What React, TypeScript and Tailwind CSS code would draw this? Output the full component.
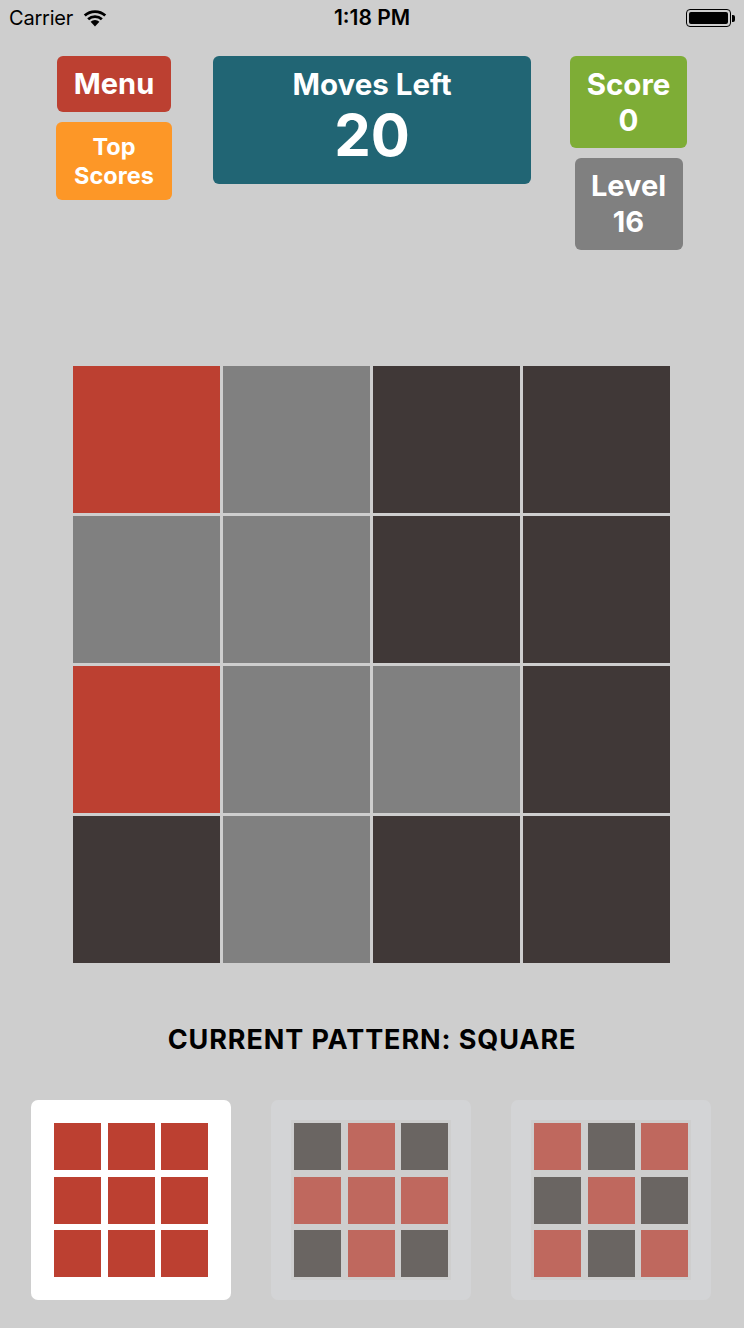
import React from "react";

const R = "bg-[#bc4031]";
const G = "bg-[#808080]";
const D = "bg-[#403837]";

const board = [
  [R, G, D, D],
  [G, G, D, D],
  [R, G, G, D],
  [D, G, D, D],
];

// 1 = red, 0 = dark
const patterns = [
  { active: true, cells: [1, 1, 1, 1, 1, 1, 1, 1, 1] },
  { active: false, cells: [0, 1, 0, 1, 1, 1, 0, 1, 0] },
  { active: false, cells: [1, 0, 1, 0, 1, 0, 1, 0, 1] },
];

function Wifi() {
  return (
    <svg width="24" height="18" viewBox="0 0 24 18">
      <path d="M0.8 5.6 A16.5 16.5 0 0 1 23.2 5.6 L21.3 7.6 A13.7 13.7 0 0 0 2.7 7.6 Z" fill="#000" />
      <path d="M4.2 9.2 A11.5 11.5 0 0 1 19.8 9.2 L17.9 11.2 A8.7 8.7 0 0 0 6.1 11.2 Z" fill="#000" />
      <path d="M7.6 12.8 A6.6 6.6 0 0 1 16.4 12.8 L12 17.4 Z" fill="#000" />
    </svg>
  );
}

function Battery() {
  return (
    <div className="flex items-center">
      <div className="w-[45px] h-[18px] rounded-[4px] border border-black p-[2px]">
        <div className="w-full h-full bg-black rounded-[2px]" />
      </div>
      <div className="w-[3px] h-[7px] bg-black rounded-r-[2px] ml-[1px]" />
    </div>
  );
}

export default function App() {
  return (
    <main
      className="w-[744px] h-[1328px] bg-[#cecece] flex flex-col overflow-hidden"
      style={{ fontFamily: "Inter, 'Liberation Sans', sans-serif" }}
    >
      <div className="h-[36px] relative flex items-center px-[9px] text-black">
        <div className="flex items-center gap-[10px]">
          <span className="text-[20px] tracking-[-0.2px]">Carrier</span>
          <Wifi />
        </div>
        <span className="absolute left-0 right-0 text-center text-[21px] font-semibold pointer-events-none">
          1:18 PM
        </span>
        <div className="ml-auto">
          <Battery />
        </div>
      </div>

      <header className="flex items-start pl-[56px] mt-[20px] text-white font-bold">
        <div className="w-[116px] flex flex-col items-center gap-[10px]">
          <button className="w-[114px] h-[56px] rounded-[6px] bg-[#bc4031] text-[29px]">
            Menu
          </button>
          <button className="w-[116px] h-[78px] rounded-[6px] bg-[#fd9727] text-[23.5px] leading-[29px] flex flex-col items-center justify-center">
            <span>Top</span>
            <span>Scores</span>
          </button>
        </div>
        <div className="ml-[41px] w-[318px] h-[128px] rounded-[6px] bg-[#216574] flex flex-col items-center pt-[10px]">
          <span className="text-[29.5px] leading-[36px]">Moves Left</span>
          <span className="text-[58px] leading-[66px]">20</span>
        </div>
        <div className="ml-[39px] w-[117px] flex flex-col items-center gap-[10px]">
          <div className="w-[117px] h-[92px] rounded-[6px] bg-[#7ead36] text-[29.5px] leading-[36px] flex flex-col items-center justify-center">
            <span>Score</span>
            <span>0</span>
          </div>
          <div className="w-[108px] h-[92px] rounded-[6px] bg-[#808080] text-[29px] leading-[36px] flex flex-col items-center justify-center">
            <span>Level</span>
            <span>16</span>
          </div>
        </div>
      </header>

      <section className="mt-[116px] ml-[73px] w-[597px] grid grid-cols-4 gap-[3px]">
        {board.flat().map((c, i) => (
          <div key={i} className={`h-[147px] ${c}`} />
        ))}
      </section>

      <p className="mt-[61px] text-center text-[27px] leading-[32px] font-bold text-black tracking-[0.9px]">
        CURRENT PATTERN: SQUARE
      </p>

      <section className="mt-[44px] pl-[31px] flex gap-[40px]">
        {patterns.map((p, i) => (
          <div
            key={i}
            className={`w-[200px] h-[200px] rounded-[7px] flex items-center justify-center ${
              p.active ? "bg-white" : "bg-[#d3d4d6]"
            }`}
          >
            <div
              className={`w-[160px] h-[160px] p-[3px] grid grid-cols-3 gap-[6.5px] ${
                p.active ? "bg-white" : "bg-[#cecece]"
              }`}
            >
              {p.cells.map((c, j) => (
                <div
                  key={j}
                  className={
                    p.active
                      ? "bg-[#bc4031]"
                      : c
                      ? "bg-[#bf685e]"
                      : "bg-[#6a6562]"
                  }
                />
              ))}
            </div>
          </div>
        ))}
      </section>
    </main>
  );
}
